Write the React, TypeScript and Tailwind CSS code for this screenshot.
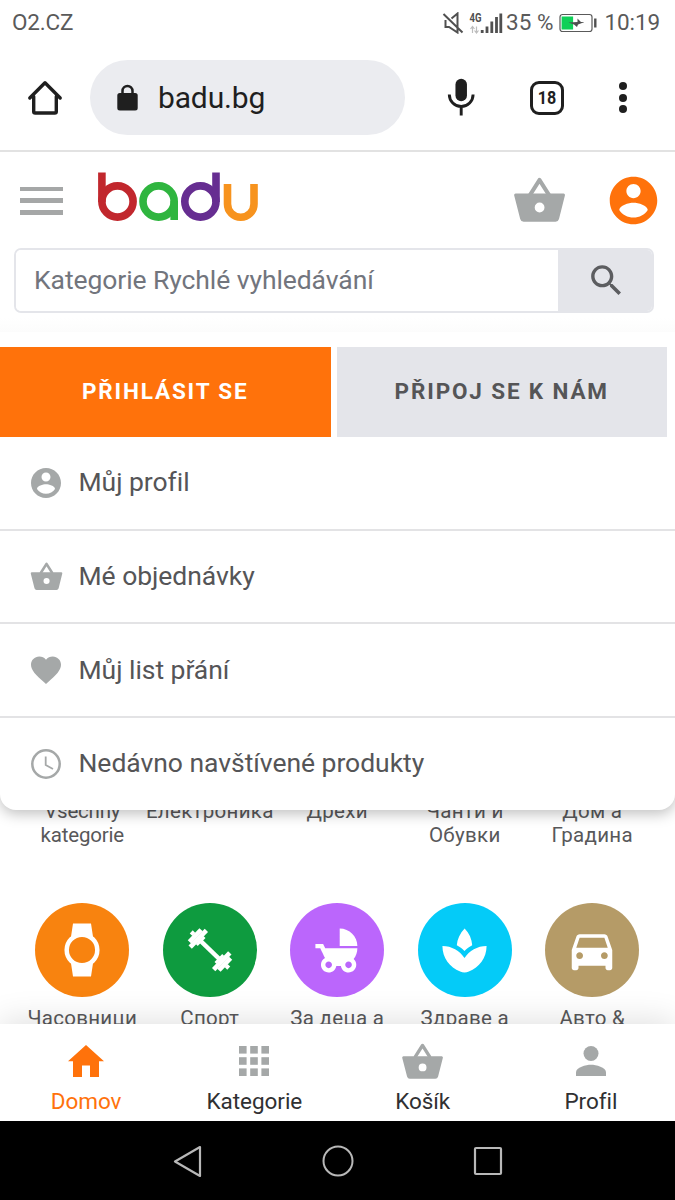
import type { ReactNode } from "react";

const ACCOUNT =
  "M12 2C6.48 2 2 6.48 2 12s4.48 10 10 10 10-4.48 10-10S17.52 2 12 2zm0 3c1.66 0 3 1.34 3 3s-1.34 3-3 3-3-1.34-3-3 1.34-3 3-3zm0 14.2c-2.5 0-4.71-1.28-6-3.22.03-1.99 4-3.08 6-3.08 1.99 0 5.97 1.09 6 3.08-1.29 1.94-3.5 3.22-6 3.22z";
const HEART =
  "M12 21.35l-1.45-1.32C5.4 15.36 2 12.28 2 8.5 2 5.42 4.42 3 7.5 3c1.74 0 3.41.81 4.5 2.09C13.09 3.81 14.76 3 16.5 3 19.58 3 22 5.42 22 8.5c0 3.78-3.4 6.86-8.55 11.54L12 21.35z";
const SEARCH =
  "M15.5 14h-.79l-.28-.27C15.41 12.59 16 11.11 16 9.5 16 5.91 13.09 3 9.5 3S3 5.91 3 9.5 5.91 16 9.5 16c1.61 0 3.09-.59 4.23-1.57l.27.28v.79l5 4.99L20.49 19l-4.99-5zm-6 0C7.01 14 5 11.99 5 9.5S7.01 5 9.5 5 14 7.01 14 9.5 11.99 14 9.5 14z";
const STROLLER =
  "M13 2v8h8c0-4.42-3.58-8-8-8zm6.32 13.89C20.37 14.54 21 12.84 21 11H6.44l-.95-2H2v2h2.22s1.89 4.07 2.12 4.42c-1.1.59-1.84 1.75-1.84 3.08C4.5 20.43 6.07 22 8 22c1.76 0 3.22-1.3 3.46-3h2.08c.24 1.7 1.7 3 3.46 3 1.93 0 3.5-1.57 3.5-3.5 0-1.04-.46-1.97-1.18-2.61zM8 20c-.83 0-1.5-.67-1.5-1.5S7.17 17 8 17s1.5.67 1.5 1.5S8.83 20 8 20zm9 0c-.83 0-1.5-.67-1.5-1.5S16.17 17 17 17s1.5.67 1.5 1.5S17.83 20 17 20z";
const SPA =
  "M15.49 9.63c-.18-2.79-1.31-5.51-3.43-7.63-2.14 2.14-3.32 4.86-3.55 7.63 1.28.68 2.46 1.56 3.49 2.63 1.03-1.06 2.21-1.94 3.49-2.63zM12 15.45C9.85 12.17 6.18 10 2 10c0 5.32 3.36 9.82 8.03 11.49.63.23 1.29.4 1.97.51.68-.12 1.33-.29 1.97-.51C18.64 19.82 22 15.32 22 10c-4.18 0-7.85 2.17-10 5.45z";
const CAR =
  "M18.92 6.01C18.72 5.42 18.16 5 17.5 5h-11c-.66 0-1.21.42-1.42 1.01L3 12v8c0 .55.45 1 1 1h1c.55 0 1-.45 1-1v-1h12v1c0 .55.45 1 1 1h1c.55 0 1-.45 1-1v-8l-2.08-5.99zM6.5 16c-.83 0-1.5-.67-1.5-1.5S5.67 13 6.5 13s1.5.67 1.5 1.5S7.33 16 6.5 16zm11 0c-.83 0-1.5-.67-1.5-1.5s.67-1.5 1.5-1.5 1.5.67 1.5 1.5-.67 1.5-1.5 1.5zM5 11l1.5-4.5h11L19 11H5z";

function Glyph({ d, className }: { d: string; className: string }) {
  return (
    <svg viewBox="0 0 24 24" fill="currentColor" className={`shrink-0 ${className}`}>
      <path d={d} />
    </svg>
  );
}

function Basket({ className }: { className: string }) {
  return (
    <svg viewBox="0 0 51 45" className={`shrink-0 ${className}`}>
      <path d="M16 18 25.5 3 35 18" fill="none" stroke="currentColor" strokeWidth="4.2" strokeLinejoin="round" />
      <path
        fill="currentColor"
        fillRule="evenodd"
        d="M1.6 16.5H49.6Q51.3 16.8 50.9 18.6L45 42Q44.2 44.800 41.600 44.800H9.600Q7 44.800 6.200 42L.2 18.600Q-.2 16.800 1.600 16.500ZM25.600 25.600A4.900 4.900 0 1 0 25.600 35.400A4.900 4.900 0 1 0 25.600 25.600Z"
      />
    </svg>
  );
}

function StatusBar() {
  return (
    <div className="flex h-[46px] shrink-0 items-center pl-3 pr-[15px] text-[22.5px] text-[#5a5a5a]">
      <span className="tracking-[-0.2px]">O2.CZ</span>
      <svg viewBox="0 0 22 22" className="ml-auto h-[22px] w-[22px]" fill="none" stroke="#505050" strokeWidth="2">
        <path d="M3.500 8v7h3.500l8.500 5.500V1.500L9.500 6.500M1.500 2 20.500 20.500" />
      </svg>
      <svg viewBox="0 0 34 24" className="ml-[5px] h-6 w-[34px]">
        <text x="0.500" y="10.500" fontSize="13" fontWeight="700" fill="#505050" textLength="12" lengthAdjust="spacingAndGlyphs">
          4G
        </text>
        <path d="M3.500 22v-6M1.500 18l2-2.500 2 2.500M7.500 15.500v6M5.500 19.500l2 2.500 2-2.500" stroke="#bdbdbd" strokeWidth="1.200" fill="none" />
        <path d="M13.200 22v-3M18 22v-6.500M22.800 22V10.500M27.500 22V6M31.800 22V2.500" stroke="#505050" strokeWidth="2.800" />
      </svg>
      <span className="ml-[3px]">35 %</span>
      <svg viewBox="0 0 38 20" className="ml-[6px] h-5 w-[38px]">
        <rect x="1" y="1.500" width="32" height="17" rx="2.500" fill="#fff" stroke="#5a5a5a" strokeWidth="1.200" />
        <rect x="2.600" y="3.500" width="11.500" height="13" fill="#0fd058" />
        <path d="M9.500 9.500 18.500 9V5.500L22 9H25V9.300L19 11.500 18 14 15 11.500Z" fill="#505050" />
        <path d="M36.300 5.500v9" stroke="#505050" strokeWidth="2.400" />
      </svg>
      <span className="ml-[7px] text-[22.500px] tracking-[-0.100px]">10:19</span>
    </div>
  );
}

function BrowserBar() {
  return (
    <div className="flex h-[106px] shrink-0 items-start border-b-2 border-[#e2e2e2] pt-[14px]">
      <svg viewBox="0 0 36 36" className="ml-[27px] mt-5 h-9 w-9" fill="none" stroke="#1f1f1f" strokeWidth="3.400" strokeLinejoin="round" strokeLinecap="round">
        <path d="M2.800 18 18 2.800 33.200 18M6.700 16.500V31.500Q6.700 33 8.200 33H27.800Q29.300 33 29.300 31.500V16.500" />
      </svg>
      <div className="ml-[27px] flex h-[75px] w-[315px] items-center rounded-full bg-[#ebecf0] pl-[27px]">
        <svg viewBox="0 0 21 27" className="h-[27px] w-[21px]">
          <path d="M5.500 11V7a5 5 0 0 1 10 0V11" fill="none" stroke="#1f1f1f" strokeWidth="2.500" />
          <rect x="0.300" y="9" width="20.400" height="17.600" rx="2.500" fill="#1f1f1f" />
        </svg>
        <span className="ml-5 text-[30px] tracking-[-0.150px] text-[#1f1f1f]">badu.bg</span>
      </div>
      <svg viewBox="0 0 28 38" className="ml-[42px] mt-[18px] h-[38px] w-7" fill="none" stroke="#1f1f1f">
        <path d="M14.200 6.500V17.500" strokeWidth="11.500" strokeLinecap="round" />
        <path d="M2.300 16.500a11.900 11.900 0 0 0 23.800 0M14.200 28.500V37.500" strokeWidth="2.900" />
      </svg>
      <div className="ml-[55px] mt-[20.500px] flex h-[34px] w-[34px] items-center justify-center rounded-[9px] border-[3.500px] border-[#1f1f1f] text-[19px] font-bold leading-none text-[#1f1f1f]">
        <span className="scale-x-[0.850]">18</span>
      </div>
      <div className="ml-[54.500px] mt-[22px] flex flex-col gap-[3.500px]">
        <span className="h-[8px] w-[8px] rounded-full bg-[#1f1f1f]" />
        <span className="h-[8px] w-[8px] rounded-full bg-[#1f1f1f]" />
        <span className="h-[8px] w-[8px] rounded-full bg-[#1f1f1f]" />
      </div>
    </div>
  );
}

function Logo() {
  return (
    <svg viewBox="98 172 160 49" role="img" aria-label="badu" className="ml-[35px] mt-[20px] h-[49px] w-[160px]" fill="none" strokeWidth="7.600">
      <g stroke="#c1272d">
        <circle cx="117.500" cy="201.500" r="15.600" />
        <line x1="101.900" x2="101.900" y1="172.500" y2="202" />
      </g>
      <g stroke="#2fb53f">
        <circle cx="158.600" cy="201.500" r="15.600" />
        <line x1="174.200" x2="174.200" y1="201" y2="220" />
      </g>
      <g stroke="#662d91">
        <circle cx="200.400" cy="201.500" r="15.600" />
        <line x1="216" x2="216" y1="172.500" y2="202" />
      </g>
      <svg x="220" y="184" width="38" height="38" viewBox="220 184 38 38">
        <rect x="227.500" y="160" width="26.500" height="57.200" rx="13.200" stroke="#f7931e" />
      </svg>
    </svg>
  );
}

function SiteHeader() {
  return (
    <header className="flex h-[180px] shrink-0 flex-col bg-gradient-to-b from-white from-92% to-[#fcfcfc]">
      <div className="flex items-start">
        <div className="ml-5 mt-[34.500px] flex w-[43px] flex-col gap-[7px]">
          <span className="h-[4.800px] bg-[#a5a7a7]" />
          <span className="h-[4.800px] bg-[#a5a7a7]" />
          <span className="h-[4.800px] bg-[#a5a7a7]" />
        </div>
        <Logo />
        <Basket className="ml-[256px] mt-[25px] h-[45px] w-[51px] text-[#a5a8a8]" />
        <Glyph d={ACCOUNT} className="ml-[40px] mt-[20px] h-[57px] w-[57px] text-[#ff720b]" />
      </div>
      <div className="ml-[14px] mt-[19px] flex h-[65px] w-[640px] overflow-hidden rounded-[7px] border-2 border-[#e4e5ea]">
        <div className="flex flex-1 items-center bg-white pb-[2px] pl-[18px] text-[26.500px] tracking-[-0.080px] text-[#72757d]">Kategorie Rychlé vyhledávání</div>
        <div className="flex w-[94px] items-center justify-center bg-[#e4e5ea] pl-[3px]">
          <Glyph d={SEARCH} className="h-[41px] w-[41px] text-[#5c5d60]" />
        </div>
      </div>
    </header>
  );
}

function MenuRow({ icon, label, last }: { icon: ReactNode; label: string; last?: boolean }) {
  return (
    <div className={`flex items-center pl-[28px] text-[26.500px] text-[#555557] ${last ? "h-[92px]" : "h-[93.700px] border-b-2 border-[#e3e3e5]"}`}>
      <span className="flex w-9 justify-center text-[#a5a8a8]">{icon}</span>
      <span className="-mt-[1.500px] ml-[14.500px] tracking-[-0.040px]">{label}</span>
    </div>
  );
}

function AccountMenu() {
  return (
    <div className="absolute inset-x-0 top-0 z-10 rounded-b-[16px] bg-white pt-[15px] shadow-[0_4px_14px_rgba(0,0,0,0.25)]">
      <div className="flex gap-[6px] pr-2 text-[22.500px] font-bold tracking-[1.850px]">
        <div className="flex h-[90px] flex-1 items-center justify-center bg-[#ff720b] text-white">PŘIHLÁSIT SE</div>
        <div className="flex h-[90px] flex-1 items-center justify-center bg-[#e4e5ea] text-[#555557]">PŘIPOJ SE K NÁM</div>
      </div>
      <MenuRow label="Můj profil" icon={<Glyph d={ACCOUNT} className="h-9 w-9" />} />
      <MenuRow label="Mé objednávky" icon={<Basket className="mb-[2px] h-[28px] w-[33px]" />} />
      <MenuRow label="Můj list přání" icon={<Glyph d={HEART} className="h-9 w-9" />} />
      <MenuRow
        last
        label="Nedávno navštívené produkty"
        icon={
          <svg viewBox="0 0 30 30" className="h-[30px] w-[30px]" fill="none" stroke="currentColor">
            <circle cx="15" cy="15" r="13.700" strokeWidth="2.500" />
            <path d="M14.700 7.500V16L22 20" strokeWidth="1.800" />
          </svg>
        }
      />
    </div>
  );
}

const watch = (
  <svg viewBox="0 0 36 54" className="h-[54px] w-9">
    <path d="M9 .500H27L29.500 17H6.500ZM6.500 37H29.500L27 53.500H9Z" fill="#fff" />
    <circle cx="18" cy="27" r="15.300" fill="#f8830f" stroke="#fff" strokeWidth="4.500" />
  </svg>
);

const dumbbell = (
  <svg viewBox="-29 -29 58 58" className="h-[54px] w-[54px]">
    <g transform="rotate(44)" fill="#fff">
      <rect x="-18" y="-2.300" width="36" height="4.600" />
      <rect x="-20" y="-12.500" width="5" height="25" />
      <rect x="-24.500" y="-9" width="5" height="18" />
      <rect x="-28" y="-2.300" width="4" height="4.600" />
      <rect x="-15.500" y="-6" width="3" height="12" />
      <rect x="15" y="-12.500" width="5" height="25" />
      <rect x="19.500" y="-9" width="5" height="18" />
      <rect x="24" y="-2.300" width="4" height="4.600" />
      <rect x="12.500" y="-6" width="3" height="12" />
    </g>
  </svg>
);

const firstRow = [["Všechny", "kategorie"], ["Електроника"], ["Дрехи"], ["Чанти и", "Обувки"], ["Дом а", "Градина"]];

const secondRow = [
  { label: "Часовници", color: "bg-[#f8830f]", icon: watch },
  { label: "Спорт", color: "bg-[#0e9b3f]", icon: dumbbell },
  { label: "За деца а", color: "bg-[#bb66fc]", icon: <Glyph d={STROLLER} className="h-[53px] w-[53px] text-white" /> },
  { label: "Здраве а", color: "bg-[#04cbf8]", icon: <Glyph d={SPA} className="h-[53px] w-[53px] text-white" /> },
  { label: "Авто &", color: "bg-[#b59b67]", icon: <Glyph d={CAR} className="h-[54px] w-[54px] text-white" /> },
];

function Categories() {
  return (
    <div className="pl-[18.500px] pr-[19px] pt-[468px] text-center text-[20.500px] leading-[23.500px] tracking-[0.300px] text-[#58585a]">
      <div className="grid h-[103px] grid-cols-5">
        {firstRow.map((lines, i) => (
          <div key={lines[0]} className={`flex flex-col items-center whitespace-nowrap ${i === 0 ? "tracking-[-0.200px]" : ""}`}>
            {lines.map((line) => (
              <span key={line}>{line}</span>
            ))}
          </div>
        ))}
      </div>
      <div className="grid grid-cols-5">
        {secondRow.map((c) => (
          <div key={c.label} className="flex flex-col items-center gap-[10px]">
            <span className={`flex h-[94px] w-[94px] items-center justify-center rounded-full ${c.color}`}>{c.icon}</span>
            <span className="whitespace-nowrap">{c.label}</span>
          </div>
        ))}
      </div>
    </div>
  );
}

const tabs = [
  {
    label: "Domov",
    active: true,
    icon: (
      <svg viewBox="0 0 36 32" className="h-8 w-9" fill="currentColor">
        <path d="M18 0 36 16.200H31V32H22V20.500H14V32H5V16.200H0Z" />
      </svg>
    ),
  },
  {
    label: "Kategorie",
    icon: (
      <svg viewBox="0 0 30 30" className="h-[30px] w-[30px]" fill="currentColor">
        {[0, 11.2, 22.4].map((y) => [0, 11.2, 22.4].map((x) => <rect key={`${x}-${y}`} x={x} y={y} width="7.600" height="7.600" />))}
      </svg>
    ),
  },
  { label: "Košík", icon: <Basket className="h-9 w-[41px]" /> },
  {
    label: "Profil",
    icon: (
      <svg viewBox="0 0 30 30" className="h-[30px] w-[30px]" fill="currentColor">
        <circle cx="15" cy="7.500" r="7.500" />
        <path d="M0 30V26.300C0 21.300 10 18.700 15 18.700S30 21.300 30 26.300V30Z" />
      </svg>
    ),
  },
];

function TabBar() {
  return (
    <nav className="z-20 grid h-[97px] shrink-0 grid-cols-4 bg-white pl-[2px] shadow-[0_-4px_30px_rgba(0,0,0,0.12)]">
      {tabs.map((t) => (
        <div key={t.label} className="flex flex-col items-center pt-[17px]">
          <span className={`flex h-[39px] items-center ${t.active ? "text-[#ff720b]" : "text-[#a5a8a8]"}`}>{t.icon}</span>
          <span className={`mt-[8px] text-[22.500px] leading-[27px] tracking-[-0.050px] ${t.active ? "text-[#ff720b]" : "text-[#303032]"}`}>{t.label}</span>
        </div>
      ))}
    </nav>
  );
}

function SystemNav() {
  return (
    <div className="z-20 flex h-[79px] shrink-0 items-center justify-center gap-[118px] bg-black">
      <svg viewBox="0 0 32 32" className="h-8 w-8" fill="none" stroke="#b8b8b8" strokeWidth="2.200" strokeLinejoin="round">
        <path d="M28 2 3 16.500 28 31Z" />
      </svg>
      <svg viewBox="0 0 32 32" className="h-8 w-8" fill="none" stroke="#b8b8b8" strokeWidth="2">
        <circle cx="16" cy="16" r="14.500" />
      </svg>
      <svg viewBox="0 0 32 32" className="h-8 w-8" fill="none" stroke="#b8b8b8" strokeWidth="2.200">
        <rect x="3" y="3" width="26" height="26" rx="1" />
      </svg>
    </div>
  );
}

export default function App() {
  return (
    <div className="flex h-[1200px] w-[675px] flex-col overflow-hidden bg-white font-[Roboto,sans-serif]">
      <StatusBar />
      <BrowserBar />
      <SiteHeader />
      <main className="relative h-[692px] shrink-0 overflow-hidden">
        <Categories />
        <AccountMenu />
      </main>
      <TabBar />
      <SystemNav />
    </div>
  );
}
